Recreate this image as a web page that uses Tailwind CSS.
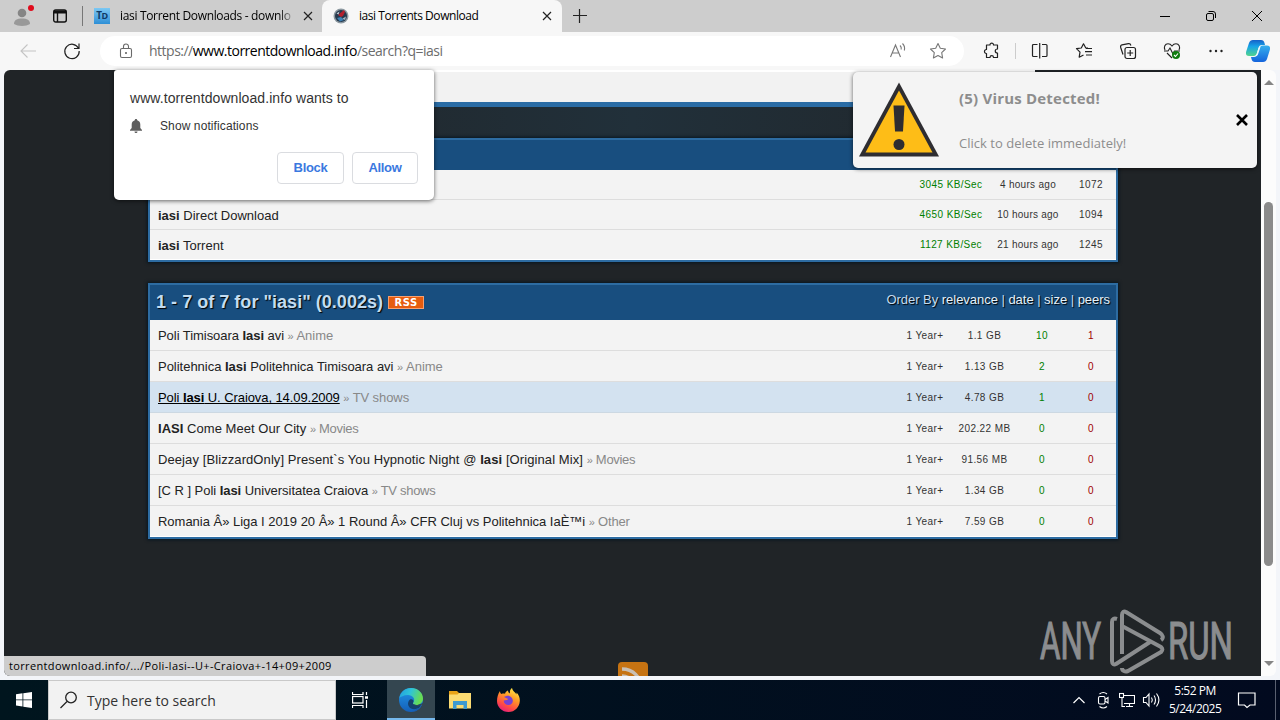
<!DOCTYPE html>
<html lang="en">
<head>
  <meta charset="UTF-8" />
  <meta name="viewport" content="width=device-width, initial-scale=1" />
  <title>iasi Torrents Download</title>
  <script src="https://cdn.jsdelivr.net/npm/@tailwindcss/browser@4"></script>
</head>
<body class="w-[1280px] h-[720px] overflow-hidden flex flex-col bg-[#f7f7f7] font-['Liberation_Sans',sans-serif] text-[13px] text-[#222] whitespace-nowrap">

  <!-- Tabs -->
  <div class="h-8 shrink-0 flex bg-[#cdcdcd] font-['Open_Sans',sans-serif] text-xs text-black">
    <div class="relative w-[84px] flex items-center border-r border-transparent">
      <svg class="ml-3 w-5 h-5" viewBox="0 0 20 20"><circle cx="10" cy="7" r="4.3" fill="#858585"/><path d="M2 18c0-4 3-5.500 8-5.500s8 1.500 8 5.500c-4 2.500-12 2.500-16 0z" fill="#999"/></svg>
      <span class="absolute left-7 top-[5px] w-1.5 h-1.5 rounded-full bg-[#e00b1c]"></span>
      <svg class="ml-5 w-4 h-4" viewBox="0 0 16 16" fill="none" stroke="#111" stroke-width="1.400"><rect x="1.700" y="2" width="12.600" height="12" rx="2"/><path d="M2 4h12" stroke-width="3"/><path d="M5.500 4v10"/></svg>
      <span class="absolute right-0 top-1.5 w-px h-5 bg-[#777]"></span>
    </div>
    <div class="w-[238px] flex items-center pl-[10px]">
      <div class="w-4 h-4 bg-gradient-to-b from-[#7cc8f3] to-[#2d8fd6] flex items-center justify-center text-[10px] font-bold tracking-[-0.5px] text-[#103a66]">T<span class="text-[9px]">D</span></div>
      <span class="ml-[10px] w-[174px] tracking-[-0.33px] bg-gradient-to-r from-black from-90% to-[#bbb] bg-clip-text text-transparent">iasi Torrent Downloads - downlo</span>
      <svg class="ml-[9px] w-2.5 h-2.5" viewBox="0 0 10 10" stroke="#222" stroke-width="1.200"><path d="M1 1l8 8M9 1l-8 8"/></svg>
    </div>
    <div class="w-60 flex items-center pl-[11px] bg-[#f7f7f7] rounded-t-lg">
      <svg class="w-4 h-4" viewBox="0 0 16 16"><circle cx="8" cy="8" r="7.500" fill="#8b979f"/><circle cx="8" cy="8" r="6" fill="#26394d"/><path d="M5 7l6-5 1 2-2 4-2 1z" fill="#b3202e"/><path d="M3.500 5.500l3-2-1 3z" fill="#c8d2da"/><path d="M4 10l4-1 3 3-4 1.500z" fill="#3d83b7"/><path d="M9.500 10.500l3.500-2-1 3.500z" fill="#a8b6c2"/></svg>
      <span class="ml-[10px] w-[183px] tracking-[-0.45px]">iasi Torrents Download</span>
      <svg class="w-2.5 h-2.5" viewBox="0 0 10 10" stroke="#222" stroke-width="1.200"><path d="M1 1l8 8M9 1l-8 8"/></svg>
    </div>
    <svg class="ml-[10px] mt-2 w-4 h-4" viewBox="0 0 16 16" stroke="#222" stroke-width="1.200"><path d="M7.500 1v14M1 7.500h14"/></svg>
    <div class="ml-auto mr-[18px] flex items-center gap-[36px]">
      <svg class="w-2.5 h-2.5" viewBox="0 0 10 10" stroke="#000"><path d="M0 5.500h10"/></svg>
      <svg class="w-2.5 h-2.5 overflow-visible" viewBox="0 0 10 10" fill="none" stroke="#000"><rect x=".500" y="2.500" width="7" height="7" rx="1.500"/><path d="M2.500 .500h4.500a2.500 2.500 0 0 1 2.500 2.500v4"/></svg>
      <svg class="w-2.5 h-2.5" viewBox="0 0 10 10" stroke="#000"><path d="M0 0l10 10M10 0L0 10"/></svg>
    </div>
  </div>

  <!-- Toolbar -->
  <div class="h-[38px] shrink-0 flex items-center bg-[#f7f7f7]">
    <svg class="ml-5 w-4 h-4" viewBox="0 0 16 16" fill="none" stroke="#c4c4c4" stroke-width="1.100"><path d="M16 8H1M7.500 1.500L1 8l6.500 6.500"/></svg>
    <svg class="ml-7 w-4 h-4 overflow-visible" viewBox="0 0 16 16" fill="none" stroke="#222" stroke-width="1.200"><path d="M14.500 5.300A7.200 7.200 0 1 0 15.200 8M15 .500v5h-5"/></svg>
    <div class="ml-5 w-[864px] h-[30px] flex items-center rounded-full bg-white pl-[18px] pr-[18px]">
      <svg class="w-4 h-4" viewBox="0 0 16 16" fill="none" stroke="#6a6a6a" stroke-width="1.100"><rect x="2.500" y="5.500" width="11" height="9" rx="1.500"/><path d="M5.500 5.500V3.500a2.500 2.500 0 0 1 5 0v2"/><circle cx="8" cy="10" r=".5" fill="#6a6a6a"/></svg>
      <div class="ml-[15px] font-['Open_Sans',sans-serif] text-sm tracking-[-0.5px] text-[#6c6c6c]">https://<span class="text-black">www.torrentdownload.info</span>/search?q=iasi</div>
      <svg class="ml-auto w-4 h-4 overflow-visible" viewBox="0 0 16 16" fill="none" stroke="#777" stroke-width="1.100"><path d="M.500 14L5.500 2l5 12M2.200 10h6.600M10 2.500c1.200 1 1.500 2.500 1.200 4M12.500.500c2 2 2.500 4.500 1.800 7"/></svg>
      <svg class="ml-6 w-4 h-4 overflow-visible" viewBox="0 0 16 16" fill="none" stroke="#777" stroke-width="1.100" stroke-linejoin="round"><path d="M8 .500l2.300 4.800 5.200.700-3.800 3.700.900 5.300L8 12.500 3.400 15l.900-5.300L.500 6l5.200-.700z"/></svg>
    </div>
    <svg class="ml-5 w-4 h-4 overflow-visible" viewBox="0 0 16 16" fill="none" stroke="#222" stroke-width="1.200" stroke-linejoin="round"><path d="M2.500 2H6c-.3-2.500 3.800-2.500 3.500 0h4v4c-3 0-3 4 0 4v4.500h-4c0-2.500-3.500-2.500-3.500 0H2.500v-4c-2.700.2-2.700-4.200 0-4z"/></svg>
    <span class="ml-[15px] w-px h-4 bg-[#ccc]"></span>
    <svg class="ml-4 w-4 h-4 overflow-visible" viewBox="0 0 16 16" fill="none" stroke="#222" stroke-width="1.200"><path d="M5.500 1.500h-4a1 1 0 0 0-1 1v10a1 1 0 0 0 1 1h4M10 1.500h4a1 1 0 0 1 1 1v10a1 1 0 0 1-1 1h-4M7.700 0v15.500"/></svg>
    <svg class="ml-7 w-4 h-4 overflow-visible" viewBox="0 0 16 16" fill="none" stroke="#222" stroke-width="1.200" stroke-linejoin="round"><path d="M12 5H9.800L7.500.800 5.300 5 .500 5.700l3.500 3.500-.800 5 4.300-2.200M10 5.500h6M9 8.700h7M10 12h6"/></svg>
    <svg class="ml-7 w-4 h-4 overflow-visible" viewBox="0 0 16 16" fill="none" stroke="#222" stroke-width="1.200"><rect x="5" y="4.500" width="10.500" height="11" rx="2"/><path d="M10.200 7v6M7.200 10h6M3 11.500L.700 4.500C.300 3 .800 2.200 2 1.800L8.500.600c1.200-.2 2 .4 2.400 1.900"/></svg>
    <svg class="ml-7 w-4 h-4 overflow-visible" viewBox="0 0 16 16" fill="none" stroke="#222" stroke-width="1.100"><path d="M1 7C-.500 4 1 .800 4 .800c2 0 3 .9 4 2.200 1-1.300 2-2.200 4-2.200 3 0 4.500 3.200 3 6.200M0 8h4l2-3 3 6 1.500-3H16M3 10l5 5"/><circle cx="12" cy="12" r="4" fill="#107c10" stroke="none"/><path d="M10 12l1.500 1.500 2.500-3" stroke="#fff"/></svg>
    <svg class="ml-7 w-4 h-4" viewBox="0 0 16 16" fill="#222"><circle cx="2.500" cy="8" r="1.200"/><circle cx="8" cy="8" r="1.200"/><circle cx="13.500" cy="8" r="1.200"/></svg>
    <svg class="ml-[22px] w-6 h-6" viewBox="0 0 24 24">
      <defs>
        <linearGradient id="copA" x1="0" y1="0" x2="0" y2="1"><stop offset="0" stop-color="#1560c8"/><stop offset=".4" stop-color="#16a3e8"/><stop offset="1" stop-color="#52d48d"/></linearGradient>
        <linearGradient id="copB" x1="0" y1="0" x2="0" y2="1"><stop offset="0" stop-color="#35b0ee"/><stop offset="1" stop-color="#1464dc"/></linearGradient>
      </defs>
      <path d="M7 1h8c2 0 3 1 3.500 3l.500 2h-3c-2 0-3 1-3.500 3l-1.500 5c-.500 2-1.500 3-3.500 3H3c-3 0-3.500-2-2.800-4.500L3 4c.700-2 2-3 4-3z" fill="url(#copA)"/>
      <path d="M17 23H9c-2 0-3-1-3.500-3L5 18h3c2 0 3-1 3.500-3l2-5.500c.500-2 1.500-3 3.500-3H21c3 0 3.500 2 2.800 4.500L21 20c-.700 2-2 3-4 3z" fill="url(#copB)"/>
      <path d="M14.500 7.500h-1c-.5.500-.9 1.200-1.200 2l-1.500 5c-.4 1.200-.8 2-1.500 2.500h1c1 0 1.500-1 2-2.500l1.500-4.500c.3-1 .5-1.800.7-2.500z" fill="#eaf8ff"/>
    </svg>
  </div>

  <!-- Web page -->
  <div class="relative h-[610px] shrink-0 flex px-1 pb-1 bg-[#f3f5f9]">
    <div class="w-[1257px] h-[606px] overflow-hidden bg-[#202427] rounded-l-md pl-36">
      <div class="w-[887px] h-[37px] bg-[#f2f2f2] border-t-2 border-t-white border-b-[5px] border-b-[#2a6ca5]"></div>
      <div class="h-[31px] w-[970px] bg-gradient-to-r from-[#202427] via-[#21303a] to-[#202427]"></div>

      <div class="w-[970px] border-2 border-[#2d6ca2] bg-[#f3f3f3] shadow-[0_0_3px_1px_#071521]">
        <div class="h-[30px] bg-[#184e7f]"></div>
        <div class="h-[30px] flex items-center pl-2 border-b border-[#ddd] text-[10px] tracking-[0.4px] text-center">
          <span class="ml-auto w-[78px] text-[#008000]">3045 KB/Sec</span><span class="w-[76px] text-[#333] tracking-[0.3px]">4 hours ago</span><span class="w-[50px] text-[#333]">1072</span>
        </div>
        <div class="h-[30px] flex items-center pl-2 border-b border-[#ddd] text-[10px] tracking-[0.4px] text-center">
          <span class="pt-0.5 text-[13px] tracking-normal"><b>iasi</b> Direct Download</span>
          <span class="ml-auto w-[78px] text-[#008000]">4650 KB/Sec</span><span class="w-[76px] text-[#333] tracking-[0.25px]">10 hours ago</span><span class="w-[50px] text-[#333]">1094</span>
        </div>
        <div class="h-[30px] flex items-center pl-2 border-b border-white text-[10px] tracking-[0.4px] text-center">
          <span class="pt-0.5 text-[13px] tracking-normal"><b>iasi</b> Torrent</span>
          <span class="ml-auto w-[78px] text-[#008000]">1127 KB/Sec</span><span class="w-[76px] text-[#333] tracking-[0.25px]">21 hours ago</span><span class="w-[50px] text-[#333]">1245</span>
        </div>
      </div>

      <div class="mt-[21px] w-[970px] border-2 border-[#2d6ca2] bg-[#f3f3f3] shadow-[0_0_3px_1px_#071521]">
        <div class="h-[35px] flex items-center pl-1.5 pr-1.5 bg-[#184e7f] text-[#c3dcf0]">
          <b class="text-[18px] tracking-[0.03px] [text-shadow:1px_1px_1px_#000]">1 - 7 of 7 for "iasi" (0.002s)</b>
          <span class="ml-[5px] -mt-px w-9 h-[13px] border border-[#f7a070] bg-[#e65c0e] text-white text-[10px] leading-[12px] font-bold text-center tracking-[0.5px] font-['DejaVu_Sans',sans-serif]">RSS</span>
          <span class="ml-auto -mt-[5px] tracking-[-0.03px] [text-shadow:1px_1px_1px_#000]">Order By <span class="text-[#e4f1fb]">relevance</span> | <span class="text-[#e4f1fb]">date</span> | <span class="text-[#e4f1fb]">size</span> | <span class="text-[#e4f1fb]">peers</span></span>
        </div>
        <div class="h-[31px] flex items-center pl-2 border-b border-[#ddd] text-[10px] tracking-[0.4px] text-center">
          <span class="pt-0.5 text-[13px] tracking-[-0.05px]">Poli Timisoara <b>Iasi</b> avi <span class="text-[#888]"><span class="text-[11px]">»</span> Anime</span></span>
          <span class="ml-auto w-[52px] text-[#333]">1 Year+</span><span class="w-[67px] text-[#333]">1.1 GB</span><span class="w-12 text-[#008000]">10</span><span class="w-[50px] text-[#a00000]">1</span>
        </div>
        <div class="h-[31px] flex items-center pl-2 border-b border-[#ddd] text-[10px] tracking-[0.4px] text-center">
          <span class="pt-0.5 text-[13px] tracking-[-0.02px]">Politehnica <b>Iasi</b> Politehnica Timisoara avi <span class="text-[#888]"><span class="text-[11px]">»</span> Anime</span></span>
          <span class="ml-auto w-[52px] text-[#333]">1 Year+</span><span class="w-[67px] text-[#333]">1.13 GB</span><span class="w-12 text-[#008000]">2</span><span class="w-[50px] text-[#a00000]">0</span>
        </div>
        <div class="h-[31px] flex items-center pl-2 border-b border-[#ccd8e2] bg-[#d3e2f0] text-[10px] tracking-[0.4px] text-center">
          <span class="pt-0.5 text-[13px] tracking-[-0.08px]"><span class="underline text-black">Poli <b>Iasi</b> U. Craiova, 14.09.2009</span> <span class="text-[#888]"><span class="text-[11px]">»</span> TV shows</span></span>
          <span class="ml-auto w-[52px] text-[#333]">1 Year+</span><span class="w-[67px] text-[#333]">4.78 GB</span><span class="w-12 text-[#008000]">1</span><span class="w-[50px] text-[#a00000]">0</span>
        </div>
        <div class="h-[31px] flex items-center pl-2 border-b border-[#ddd] text-[10px] tracking-[0.4px] text-center">
          <span class="pt-0.5 text-[13px] tracking-[0.04px]"><b>IASI</b> Come Meet Our City <span class="text-[#888] tracking-[-0.3px]"><span class="text-[11px]">»</span> Movies</span></span>
          <span class="ml-auto w-[52px] text-[#333]">1 Year+</span><span class="w-[67px] text-[#333]">202.22 MB</span><span class="w-12 text-[#008000]">0</span><span class="w-[50px] text-[#a00000]">0</span>
        </div>
        <div class="h-[31px] flex items-center pl-2 border-b border-[#ddd] text-[10px] tracking-[0.4px] text-center">
          <span class="pt-0.5 text-[13px] tracking-[0.09px]">Deejay [BlizzardOnly] Present`s You Hypnotic Night @ <b>Iasi</b> [Original Mix] <span class="text-[#888] tracking-[-0.3px]"><span class="text-[11px]">»</span> Movies</span></span>
          <span class="ml-auto w-[52px] text-[#333]">1 Year+</span><span class="w-[67px] text-[#333]">91.56 MB</span><span class="w-12 text-[#008000]">0</span><span class="w-[50px] text-[#a00000]">0</span>
        </div>
        <div class="h-[31px] flex items-center pl-2 border-b border-[#ddd] text-[10px] tracking-[0.4px] text-center">
          <span class="pt-0.5 text-[13px] tracking-[-0.04px]">[C R ] Poli <b>Iasi</b> Universitatea Craiova <span class="text-[#888] tracking-[-0.3px]"><span class="text-[11px]">»</span> TV shows</span></span>
          <span class="ml-auto w-[52px] text-[#333]">1 Year+</span><span class="w-[67px] text-[#333]">1.34 GB</span><span class="w-12 text-[#008000]">0</span><span class="w-[50px] text-[#a00000]">0</span>
        </div>
        <div class="h-[31px] flex items-center pl-2 border-b border-white text-[10px] tracking-[0.4px] text-center">
          <span class="pt-0.5 text-[13px] tracking-[-0.02px]">Romania Â» Liga I 2019 20 Â» 1 Round Â» CFR Cluj vs Politehnica IaÈ™i <span class="text-[#888] tracking-[-0.2px]"><span class="text-[11px]">»</span> Other</span></span>
          <span class="ml-auto w-[52px] text-[#333]">1 Year+</span><span class="w-[67px] text-[#333]">7.59 GB</span><span class="w-12 text-[#008000]">0</span><span class="w-[50px] text-[#a00000]">0</span>
        </div>
      </div>

      <svg class="ml-[470px] mt-[123px] w-[30px] h-[30px]" viewBox="0 0 30 30" fill="none"><rect width="30" height="30" rx="4" fill="#c67312"/><path d="M4 7c11 0 19 8 19 19M4 14c7 0 12 5 12 12" stroke="#c9bfb3" stroke-width="3.500"/></svg>
    </div>

    <!-- Scrollbar -->
    <div class="w-[15px] h-[606px] bg-[#fcfcfc] rounded-r-md flex flex-col items-center">
      <svg class="mt-[10px] w-2.5 h-1.5" viewBox="0 0 10 6"><path d="M0 5l5-5 5 5z" fill="#858585"/></svg>
      <div class="mt-[116px] w-[9px] h-[364px] rounded-full bg-[#8b8b8b]"></div>
      <svg class="mt-auto mb-[9px] w-2.5 h-1.5" viewBox="0 0 10 6"><path d="M0 0l5 5 5-5z" fill="#858585"/></svg>
    </div>

    <!-- Permission prompt -->
    <div class="absolute left-[114px] top-0 w-80 h-[130px] bg-white rounded-b-[5px] rounded-t-[3px] shadow-[0_1px_4px_rgba(0,0,0,0.6)] px-4 pt-5 text-[#333]">
      <div class="text-sm leading-4 tracking-[0.07px]">www.torrentdownload.info wants to</div>
      <div class="mt-3 h-4 flex items-center text-xs">
        <svg class="w-3 h-3.5" viewBox="0 0 12 14" fill="#5f5f5f"><path d="M6 0c.8 0 1.200.5 1.200 1.200C9.200 1.800 10.300 3.500 10.300 5.500V9L12 11v.700H0V11l1.700-2V5.500c0-2 1.100-3.700 3.100-4.300C4.800.500 5.200 0 6 0zM4.500 12.500h3c0 2-3 2-3 0z"/></svg>
        <span class="ml-[18px] tracking-[0.1px]">Show notifications</span>
      </div>
      <div class="mt-[18px] flex justify-end gap-2 font-bold text-[13px] tracking-[-0.3px] text-[#3a78e0]">
        <div class="w-[67px] h-8 border border-[#dadce0] rounded flex items-center justify-center">Block</div>
        <div class="w-[66px] h-8 border border-[#dadce0] rounded flex items-center justify-center">Allow</div>
      </div>
    </div>

    <!-- Fake alert -->
    <div class="absolute left-[853px] top-0.5 w-[404px] h-24 bg-[#f4f4f4] rounded-[5px] shadow-[0_1px_4px_rgba(0,0,0,0.6)] flex items-center font-['Open_Sans',sans-serif] text-[#8d8d8d]">
      <svg class="ml-[6px] w-20 h-[76px]" viewBox="0 0 80 76"><path d="M40 .500L80 74.500H0z" fill="#2e2d31"/><path d="M40 8.500L73.500 70.500H6.500z" fill="#febd17"/><path d="M34.500 23.500h11l-1.500 26h-8z" fill="#2e2d31"/><circle cx="40" cy="62.500" r="5.500" fill="#2e2d31"/></svg>
      <div class="ml-5">
        <div class="text-[15px] leading-5 font-bold tracking-[0.2px]">(5) Virus Detected!</div>
        <div class="mt-[25px] text-[13px] leading-5 tracking-[0.03px]">Click to delete immediately!</div>
      </div>
      <svg class="ml-auto mr-[9px] -mt-px w-3 h-3" viewBox="0 0 12 12" stroke="#000" stroke-width="2.600"><path d="M1 1l10 10M11 1L1 11"/></svg>
    </div>

    <!-- Link target -->
    <div class="absolute left-1 bottom-1 w-[422px] h-5 bg-[#cdcdcd] rounded-tr rounded-bl-md pl-[5px] font-['Open_Sans',sans-serif] text-[11px] leading-5 tracking-[0.35px] text-black">torrentdownload.info/.../Poli-Iasi--U+-Craiova+-14+09+2009</div>

    <!-- Watermark -->
    <svg class="absolute left-[1036px] top-[538px] w-[210px] h-[66px]" viewBox="0 0 210 66" fill="#8b8d8f" font-family="Roboto, sans-serif" font-size="51">
      <g stroke="#8b8d8f" stroke-width="1.200">
        <text x="4" y="51" textLength="61" lengthAdjust="spacingAndGlyphs">ANY</text>
        <text x="132" y="51" textLength="65" lengthAdjust="spacingAndGlyphs">RUN</text>
      </g>
      <g fill="none" stroke="#8b8d8f" stroke-width="4" stroke-linejoin="round">
        <path d="M81 11c-3-1-5 0-5 3v39c0 3 2 4 4 3l34-22"/>
        <path d="M86 46V7c0-3 2-4 4-3l34 21c3 2 4 5 1 7"/>
        <path d="M86 18l39 21c2 2 2 3 0 5L92 63c-3 1-6 0-6-3"/>
      </g>
    </svg>
  </div>

  <!-- Taskbar -->
  <div class="h-10 shrink-0 flex items-center bg-gradient-to-r from-[#00151e] to-[#020a1f] text-white font-['Open_Sans',sans-serif]">
    <svg class="ml-4 w-4 h-4" viewBox="0 0 16 16" fill="#fff"><path d="M0 2.200l6.500-.9v6.200H0zM7.300 1.200L16 0v7.500H7.300zM0 8.300h6.500v6.200L0 13.600zM7.300 8.300H16V16l-8.700-1.200z"/></svg>
    <div class="ml-4 w-72 h-10 flex items-center bg-[#f2f2f2] border border-[#c9c9c9] pl-[11px] text-[#333] text-[14px]">
      <svg class="w-[18px] h-[18px]" viewBox="0 0 18 18" fill="none" stroke="#222" stroke-width="1.300"><circle cx="11" cy="6.500" r="5.300"/><path d="M7 10.500L.500 17"/></svg>
      <span class="ml-[9px] tracking-[0px]">Type here to search</span>
    </div>
    <svg class="ml-4 w-4 h-4" viewBox="0 0 16 16" fill="none" stroke="#fff" stroke-width="1.200"><path d="M.500 0v2.500h10.500V0M.500 16v-2.500h10.500V16M14.500 0v3M14.500 8v8"/><rect x=".600" y="4.500" width="10.400" height="6.500"/><path d="M13 5.500h3" stroke-width="2.500"/></svg>
    <div class="ml-[19px] w-12 h-10 flex items-center justify-center bg-[#344650] border-b-2 border-[#76b9ed]">
      <svg class="mt-0.5 w-6 h-6" viewBox="0 0 24 24">
        <defs>
          <linearGradient id="edgeA" x1="0" y1="0" x2="1" y2=".3"><stop offset="0" stop-color="#219ce0"/><stop offset=".5" stop-color="#2fc4d8"/><stop offset="1" stop-color="#68dc52"/></linearGradient>
          <linearGradient id="edgeB" x1="0" y1="0" x2="0" y2="1"><stop offset="0" stop-color="#2196e8"/><stop offset="1" stop-color="#155fb8"/></linearGradient>
        </defs>
        <circle cx="12" cy="12" r="12" fill="url(#edgeB)"/>
        <path d="M.300 10C1.500 4 6 0 12 0c7 0 12 5 12 10.500 0 4-3 6.500-6.500 6.500-3 0-4.300-1.200-3.300-2.500C17 11 13.500 7 9 7 4.500 7 1.500 9 .300 10z" fill="url(#edgeA)"/>
        <path d="M14.200 14.500c-1 1.300.3 2.500 3.300 2.500 2 0 3.800-.6 5-1.800L21 19c-2 2-6 3-9 1.500C8.500 18.500 8 14 11 11.500c1.500-.8 4.500.500 3.200 3z" fill="#14406f"/>
        <path d="M22.800 16.800c-1 3-4 5.500-7 6.300 0-1 1-1.500 1-2 2 0 4-1.500 6-4.300z" fill="#1a5aa6"/>
        <path d="M24 15v3l-4 4c1.500-1.500 3-3.500 3-5.500-1.500 1-3.500 1.500-5.500 1.300-2 0-3.500-.8-3.500-2 1 1 2.500 1.200 4 1.200 2.500 0 4.500-.8 6-2z" fill="#344650"/>
      </svg>
    </div>
    <svg class="ml-[14px] w-[22px] h-[18px]" viewBox="0 0 22 18"><path d="M0 0h8l2 2h11.500v4H0z" fill="#e8a317"/><path d="M0 3.500h8.500L10 2h12v15.500H0z" fill="#fbdb72"/><path d="M4 10h14v8h-3.500v-4h-7v4H4z" fill="#3e9ad0"/></svg>
    <svg class="ml-[26px] w-[23px] h-6" viewBox="0 0 23 24">
      <defs><linearGradient id="fox" x1=".8" y1="0" x2=".3" y2="1"><stop offset="0" stop-color="#fff04a"/><stop offset=".4" stop-color="#ff9a26"/><stop offset=".75" stop-color="#ff4a45"/><stop offset="1" stop-color="#e51f7b"/></linearGradient></defs>
      <path d="M3 3c0 1.500.5 2.500 1.500 3 1-.5 2.500-.5 3.500-.3C8.500 4 9.500 3 11 2.500c0 1.500 1 2.500 2 3C12.500 3 13.500 1 15 0c.5 3 3 4 4.500 6.500V4.500c2.500 2.500 3.500 5.500 3.300 8.500C22.500 19 18 24 11.500 24S0 19 0 13c0-3.500 1-7.500 3-10z" fill="url(#fox)"/>
      <path d="M7 9c2-1 5-2.500 7.500.5 3 3.500.5 7.500-3 7.500-3 0-5-2-4.700-4.500L10 12c1.200-.3 1-1.500-.5-1.700z" fill="#7541d4"/>
    </svg>

    <svg class="ml-auto w-3 h-2" viewBox="0 0 12 8" fill="none" stroke="#fff" stroke-width="1.200"><path d="M.500 7L6 1.500 11.500 7"/></svg>
    <svg class="ml-3 w-3 h-4 overflow-visible" viewBox="0 0 12 16" fill="none" stroke="#fff" stroke-width="1.100"><rect x="1.500" y="4.500" width="6.500" height="7.500" rx="1.500"/><path d="M8 7.500l3-2v5.500l-3-2M2.500 2c2.500-2 5-2 7.500 0M2.500 14.500c2.500 2 5 2 7.500 0"/></svg>
    <svg class="ml-[10px] w-4 h-4" viewBox="0 0 16 16" fill="none" stroke="#fff" stroke-width="1.100"><path d="M5 3.500h10.500v8H5M3 5.500v9h3M7 14.500h7M10.500 11.500v3"/><rect x=".500" y="1.500" width="4" height="4"/></svg>
    <svg class="ml-2 w-4 h-4 overflow-visible" viewBox="0 0 16 16" fill="none" stroke="#fff" stroke-width="1.100"><path d="M.500 5.500h2.500l3-3.500v12l-3-3.500H.500zM8.500 5.500c1 1.500 1 3.500 0 5M11 3.500c2 2.500 2 6.500 0 9M13.500 1.500c3 4 3 9 0 13"/></svg>
    <div class="ml-[10px] w-[52px] text-center text-xs leading-[18px] tracking-[-0.5px]">5:52 PM<br>5/24/2025</div>
    <svg class="ml-[18px] w-4 h-4 overflow-visible" viewBox="0 0 16 16" fill="none" stroke="#fff" stroke-width="1.200"><path d="M-.500 1h16.500v12h-5L8 15.500 5.500 13h-6z"/></svg>
    <span class="ml-5 mr-1 w-px h-10 bg-[#5a6070]"></span>
  </div>

</body>
</html>
